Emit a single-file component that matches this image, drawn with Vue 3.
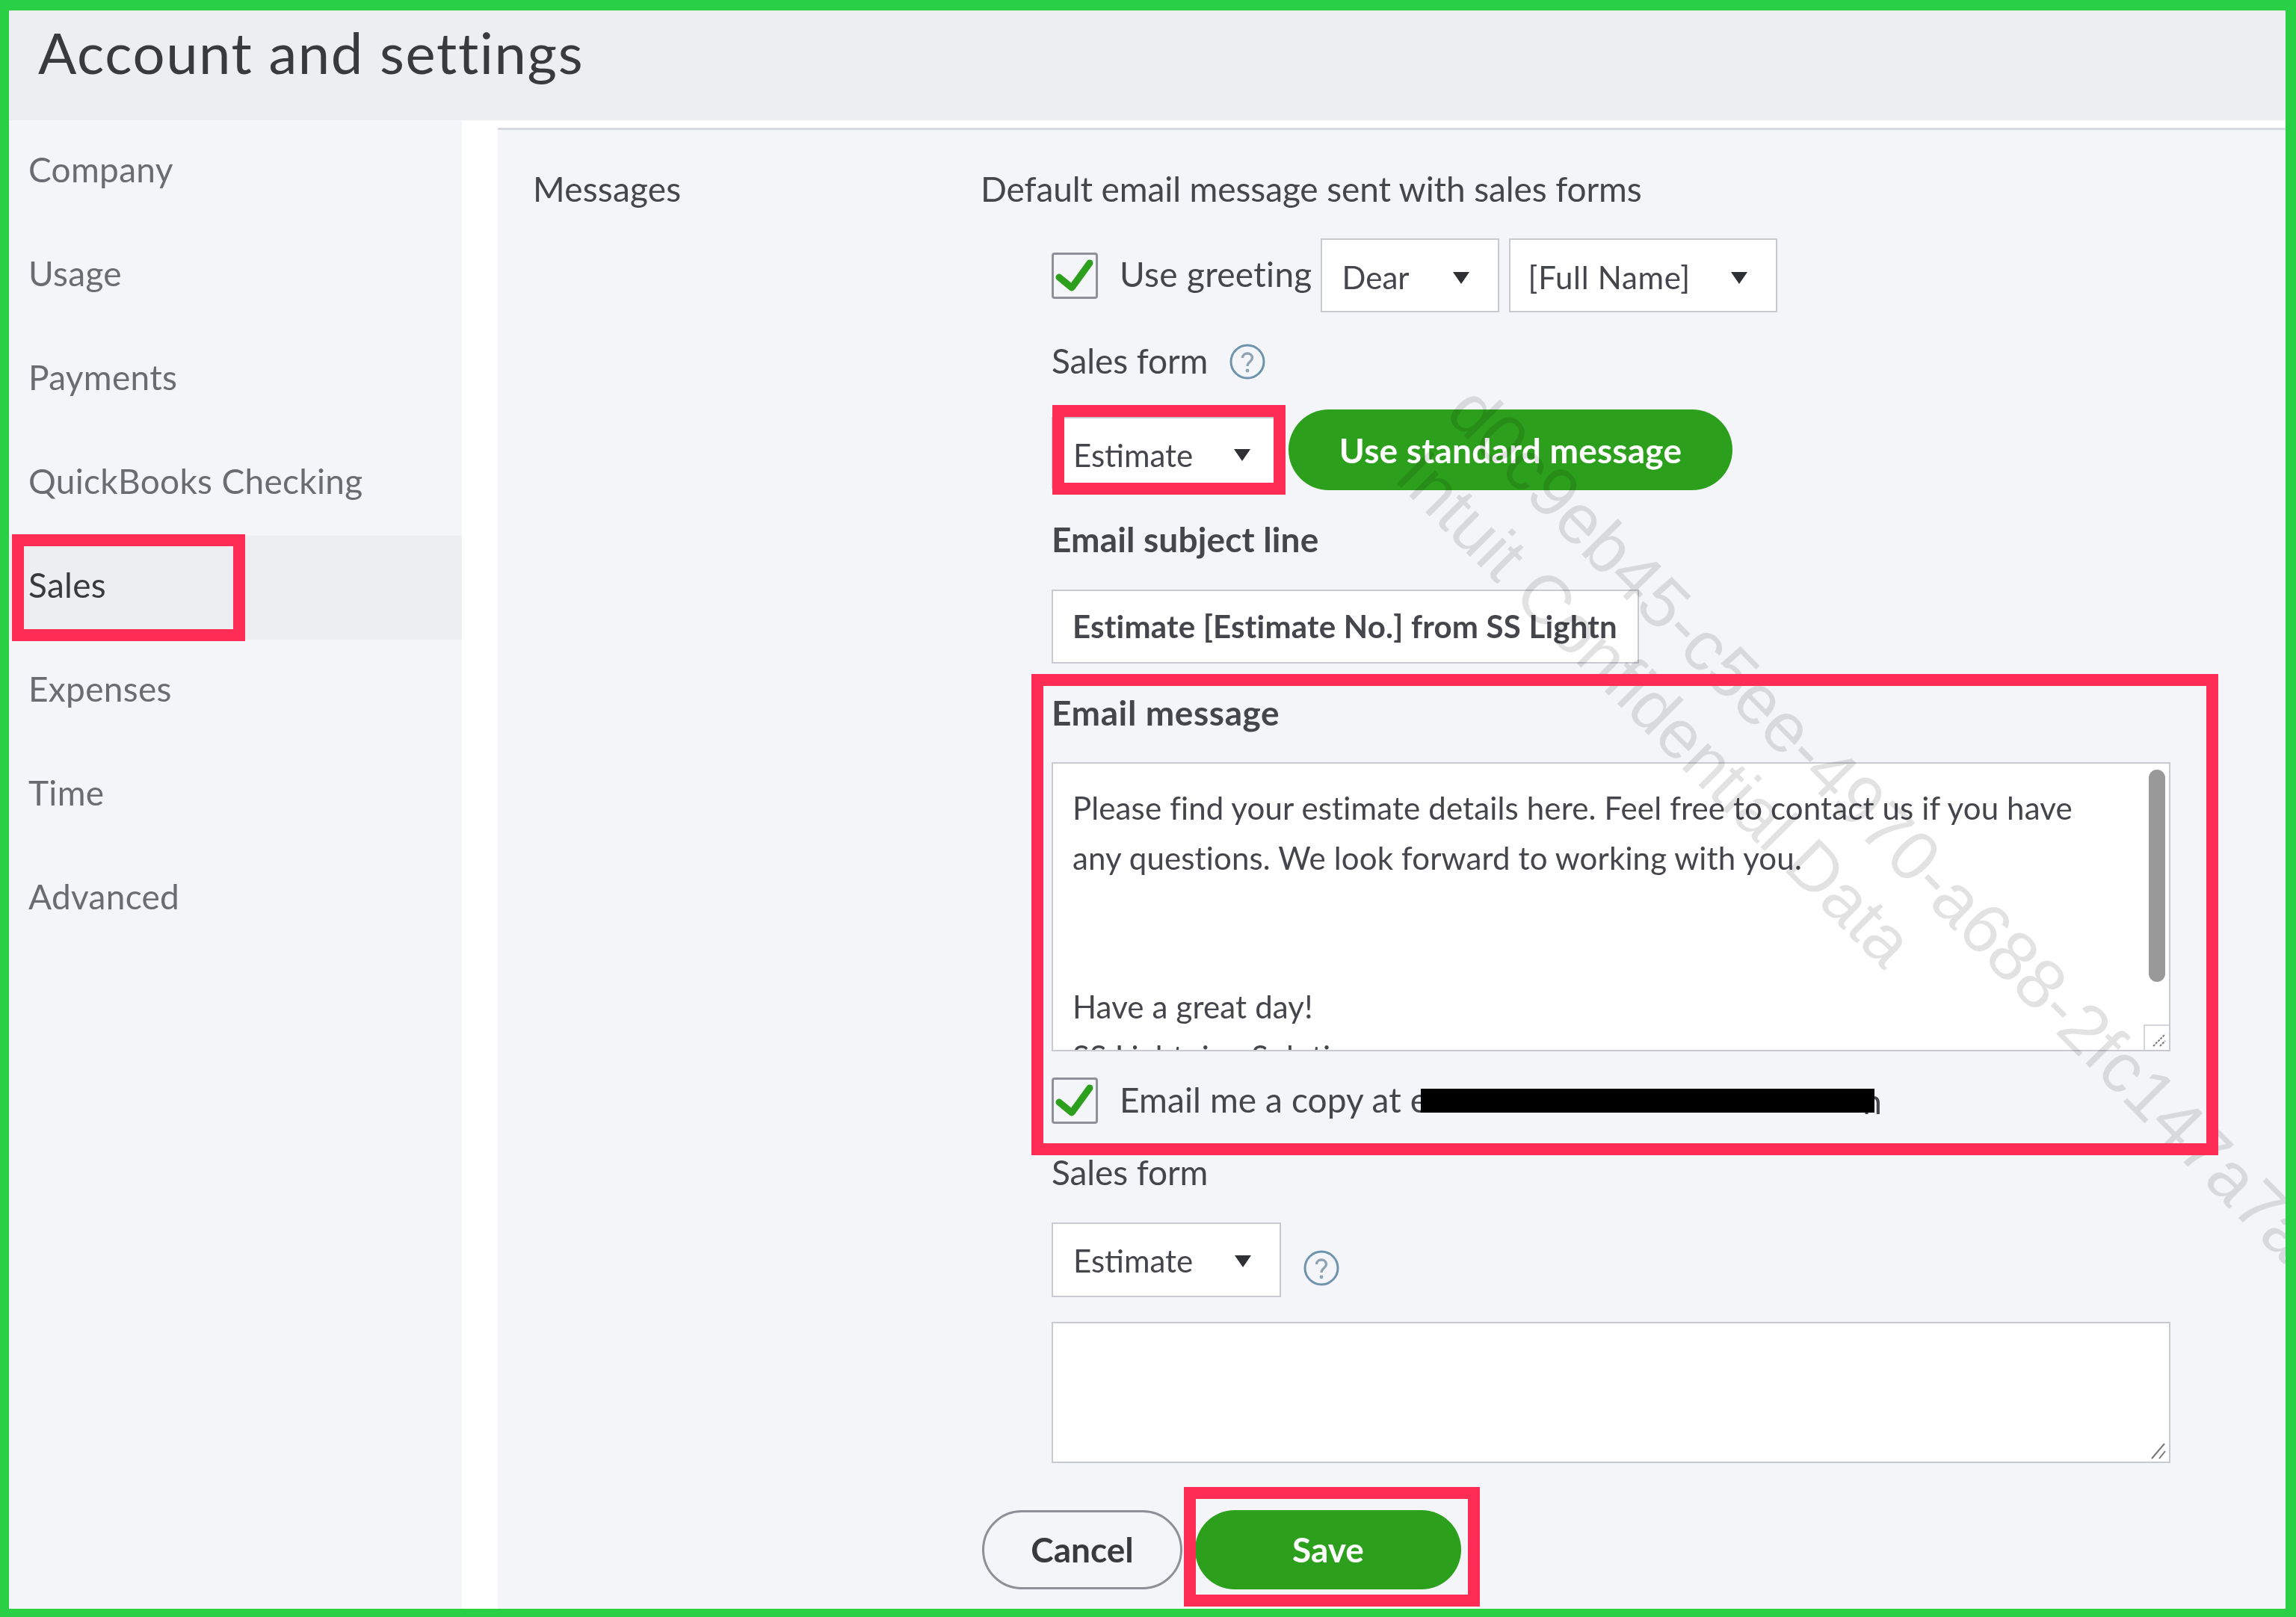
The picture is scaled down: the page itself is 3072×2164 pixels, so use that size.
<script setup>
const navItems = ['Company', 'Usage', 'Payments', 'QuickBooks Checking', 'Sales', 'Expenses', 'Time', 'Advanced']
const messageLines = [
  'Please find your estimate details here. Feel free to contact us if you have',
  'any questions. We look forward to working with you.',
  '\u00a0',
  '\u00a0',
  'Have a great day!',
  'SS Lightning Solutions',
]
</script>

<template>
  <div class="frame">
    <header class="title-bar"><h1>Account and settings</h1></header>
    <div class="body">
      <nav class="side">
        <div v-for="item in navItems" :key="item" class="nav-item" :class="{ active: item === 'Sales' }">{{ item }}</div>
      </nav>
      <main class="main">
        <div class="section-label">Messages</div>
        <div class="content">
          <div class="line">Default email message sent with sales forms</div>
          <div class="form">
            <div class="row greeting">
              <span class="check">
                <svg viewBox="0 0 62 62" width="62" height="62"><path d="M10 33 L27 47 L51 14" fill="none" stroke="#2ca01c" stroke-width="9" stroke-linejoin="round" stroke-linecap="round" /></svg>
              </span>
              <span class="check-label raised">Use greeting</span>
              <div class="select dear"><span>Dear</span><i class="arrow"></i></div>
              <div class="select fullname"><span>[Full Name]</span><i class="arrow"></i></div>
            </div>
            <div class="line mt40 with-help">
              <span>Sales form</span>
              <svg class="help" viewBox="0 0 48 48" width="48" height="48"><circle cx="24" cy="24" r="22" fill="none" stroke="#6d93ad" stroke-width="3" /><path d="M17.5 19 C17.5 11 30.5 11 30.5 19 C30.5 24 24 24 24 30" fill="none" stroke="#8fa3b3" stroke-width="3.4" /><circle cx="24" cy="36" r="2.4" fill="#8fa3b3" /></svg>
            </div>
            <div class="row estimate-row">
              <div class="select estimate"><span>Estimate</span><i class="arrow"></i></div>
              <button class="pill green standard">Use standard message</button>
            </div>
            <div class="line strong mt41">Email subject line</div>
            <div class="input">Estimate [Estimate No.] from SS Lightn</div>
            <div class="line strong wide mt41">Email message</div>
            <div class="textarea big">
              <div v-for="(l, i) in messageLines" :key="i" class="msg-line">{{ l }}</div>
              <span class="thumb"></span>
              <span class="corner boxed">
                <svg viewBox="0 0 30 30" width="30" height="30"><path d="M11 27 L27 11 M20 27 L27 20" stroke="#777" stroke-width="2" stroke-dasharray="3 1.5" /></svg>
              </span>
            </div>
            <div class="row copy-row">
              <span class="check">
                <svg viewBox="0 0 62 62" width="62" height="62"><path d="M10 33 L27 47 L51 14" fill="none" stroke="#2ca01c" stroke-width="9" stroke-linejoin="round" stroke-linecap="round" /></svg>
              </span>
              <span class="check-label copy-label">Email me a copy at e</span>
              <span class="redact"></span>
              <span class="tail">n</span>
            </div>
            <div class="line form-label">Sales form</div>
            <div class="row second-row">
              <div class="select estimate2"><span>Estimate</span><i class="arrow"></i></div>
              <svg class="help2" viewBox="0 0 48 48" width="48" height="48"><circle cx="24" cy="24" r="22" fill="none" stroke="#6d93ad" stroke-width="3" /><path d="M17.5 19 C17.5 11 30.5 11 30.5 19 C30.5 24 24 24 24 30" fill="none" stroke="#8fa3b3" stroke-width="3.4" /><circle cx="24" cy="36" r="2.4" fill="#8fa3b3" /></svg>
            </div>
            <div class="textarea small">
              <span class="corner">
                <svg viewBox="0 0 30 30" width="30" height="30"><path d="M9 28 L26 8 M19 28 L27 18" stroke="#777" stroke-width="2" /></svg>
              </span>
            </div>
          </div>
          <div class="actions">
            <button class="pill cancel">Cancel</button>
            <button class="pill green save">Save</button>
          </div>
        </div>
        <div class="mark mark-a">d0c9eb45-c5ee-4970-a688-2fc147a7ac</div>
        <div class="mark mark-b">Intuit Confidential Data</div>
      </main>
    </div>
    <span class="callout c-sales"></span>
    <span class="callout c-estimate"></span>
    <span class="callout c-message"></span>
    <span class="callout c-save"></span>
  </div>
</template>

<style>
html, body { margin: 0; background: #fff; }
</style>

<style scoped>
.frame {
  position: relative;
  box-sizing: border-box;
  width: 3072px;
  height: 2164px;
  border-style: solid;
  border-color: #29d046;
  border-width: 14px 14px 11px 12px;
  background: #fff;
  display: flex;
  flex-direction: column;
  font-family: Lato, "Open Sans", sans-serif;
  color: #45464b;
  overflow: hidden;
}
.title-bar {
  height: 147px;
  flex: none;
  background: #eceef1;
  box-sizing: border-box;
  padding: 0 0 0 39px;
  filter: blur(0.6px);
}
h1 {
  margin: 0;
  font-weight: 400;
  font-size: 76px;
  line-height: 111px;
  letter-spacing: 1.6px;
  color: #393a3d;
}
.body { flex: 1; display: flex; min-height: 0; filter: blur(0.6px); }
.side {
  width: 606px;
  flex: none;
  background: #f4f5f9;
}
.nav-item {
  box-sizing: border-box;
  height: 139px;
  padding: 0 0 9px 26px;
  display: flex;
  align-items: center;
  font-size: 46px;
  letter-spacing: 0.3px;
  color: #6b6c72;
}
.nav-item.active { background: #eceef1; color: #393a3d; }
.main {
  position: relative;
  overflow: hidden;
  flex: 1;
  margin: 10px 0 0 48px;
  border-top: 3px solid #d6d9de;
  background: #f4f5f9;
  display: flex;
  padding: 54px 0 0 48px;
}
.section-label {
  width: 598px;
  flex: none;
  height: 50px;
  line-height: 50px;
  font-size: 46px;
  letter-spacing: 0.2px;
  transform: translateX(-1px);
}
.content { position: relative; z-index: 0; }
.line { height: 50px; line-height: 50px; font-size: 46px; white-space: nowrap; letter-spacing: -0.1px; }
.strong { font-weight: 700; letter-spacing: 0.15px; }
.wide { letter-spacing: 0.6px; }
.form { margin-left: 95px; width: 1497px; }
.row { display: flex; align-items: center; }
.greeting { margin-top: 41px; height: 99px; }
.check {
  box-sizing: border-box;
  width: 62px;
  height: 62px;
  flex: none;
  border: 3px solid #8d9096;
  border-radius: 4px;
  background: transparent;
  position: relative;
}
.check svg { position: absolute; left: -3px; top: -3px; }
.check-label { margin-left: 29px; font-size: 46px; white-space: nowrap; letter-spacing: 0.1px; }
.raised { margin-top: -5px; letter-spacing: 0.3px; }
.copy-label { margin-top: -3px; }
.select {
  box-sizing: border-box;
  background: #fff;
  border: 2px solid #c8cad0;
  display: flex;
  align-items: center;
  justify-content: space-between;
  font-size: 42px;
  height: 99px;
  padding: 5px 38px 0 27px;
  white-space: nowrap;
}
.arrow {
  width: 0;
  height: 0;
  border-left: 11px solid transparent;
  border-right: 11px solid transparent;
  border-top: 16px solid #2f3033;
  margin-top: 1px;
}
.dear { width: 239px; margin-left: 11px; }
.fullname { width: 359px; margin-left: 13px; padding-left: 24px; letter-spacing: 0.7px; }
.mt40 { margin-top: 40px; }
.mt41 { margin-top: 41px; }
.with-help { display: flex; align-items: center; }
.help { margin-left: 29px; margin-top: 2px; }
.estimate-row { margin-top: 40px; height: 108px; }
.estimate { width: 306px; height: 96px; align-self: flex-start; margin-top: 10px; }
.pill {
  border: none;
  border-radius: 60px;
  font-family: inherit;
  font-size: 46px;
  font-weight: 700;
  padding: 0;
}
.green { background: #2ca01c; color: #fff; }
.standard { width: 594px; height: 108px; margin-left: 11px; letter-spacing: 0.2px; }
.input {
  box-sizing: border-box;
  margin-top: 42px;
  width: 786px;
  height: 99px;
  background: #fff;
  border: 2px solid #c8cad0;
  padding-left: 26px;
  font-size: 42px;
  font-weight: 700;
  letter-spacing: 0.2px;
  line-height: 95px;
  white-space: nowrap;
  overflow: hidden;
}
.textarea {
  position: relative;
  box-sizing: border-box;
  width: 1497px;
  background: #fff;
  border: 2px solid #c8cad0;
  overflow: hidden;
}
.big { margin-top: 41px; height: 387px; padding: 26px 0 0 26px; }
.small { margin-top: 33px; height: 189px; }
.msg-line { height: 66.5px; line-height: 66.5px; font-size: 42px; letter-spacing: 0.14px; white-space: nowrap; }
.thumb {
  position: absolute;
  right: 5px;
  top: 8px;
  width: 22px;
  height: 284px;
  border-radius: 11px;
  background: #999;
}
.corner { position: absolute; right: 0; bottom: 0; width: 32px; height: 32px; }
.corner.boxed { border: 2px solid #d4d6da; border-right: 0; border-bottom: 0; background: #fff; }
.copy-row { margin-top: 35px; height: 62px; position: relative; }
.redact { position: relative; z-index: 1; width: 607px; height: 32px; background: #000; flex: none; margin-left: -10px; }
.tail { font-size: 46px; margin-left: -16px; }
.form-label { margin-top: 40px; }
.second-row { margin-top: 42px; height: 100px; }
.estimate2 { width: 307px; height: 100px; padding-top: 2px; }
.help2 { margin: 22px 0 0 30px; }
.actions { display: flex; margin: 63px 0 0 2px; gap: 17px; }
.cancel {
  box-sizing: border-box;
  width: 268px;
  height: 106px;
  padding-bottom: 2px;
  background: transparent;
  border: 3px solid #8d9096;
  color: #393a3d;
}
.save { width: 356px; height: 106px; padding-bottom: 2px; }
.mark {
  position: absolute;
  white-space: nowrap;
  font-family: "Liberation Sans", sans-serif;
  color: rgba(0, 0, 0, 0.115);
  line-height: 1;
  transform-origin: 0 100%;
  pointer-events: none;
  z-index: 2;
}
.mark-a { font-size: 94px; left: 1255px; top: 298px; transform: rotate(45.3deg); }
.mark-b { font-size: 92px; left: 1187px; top: 385px; transform: rotate(45deg); }
.callout { position: absolute; box-sizing: border-box; border: 16px solid #ff2d55; pointer-events: none; }
.c-sales { left: 4px; top: 701px; width: 312px; height: 143px; }
.c-estimate { left: 1396px; top: 528px; width: 312px; height: 120px; }
.c-message { left: 1368px; top: 888px; width: 1588px; height: 644px; }
.c-save { left: 1572px; top: 1976px; width: 396px; height: 160px; }
</style>
